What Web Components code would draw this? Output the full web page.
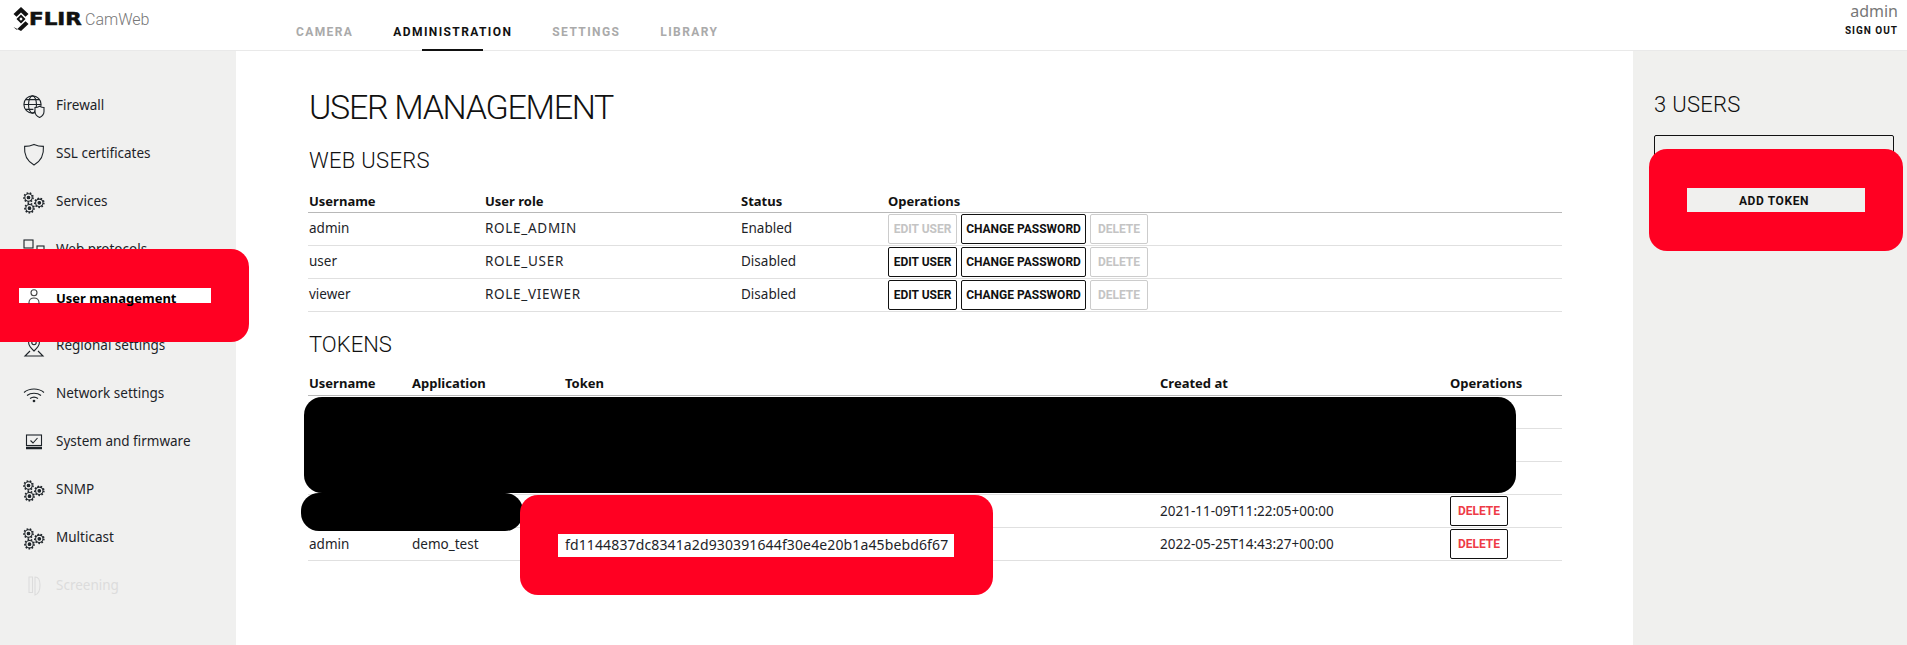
<!DOCTYPE html>
<html lang="en">
<head>
<meta charset="utf-8">
<title>FLIR CamWeb</title>
<style>
  html, body { margin: 0; height: 100%; background: #fff; }
  body { font-family: "Noto Sans", sans-serif; color: #1d2328; overflow: hidden; }
</style>
</head>
<body>
<cam-app>
  <app-header slot="top"></app-header>
  <side-nav slot="left">
    <nav-item icon="firewall">Firewall</nav-item>
    <nav-item icon="shield">SSL certificates</nav-item>
    <nav-item icon="gears">Services</nav-item>
    <nav-item icon="web">Web protocols</nav-item>
    <nav-item icon="user" active>User management</nav-item>
    <nav-item icon="pin">Regional settings</nav-item>
    <nav-item icon="wifi">Network settings</nav-item>
    <nav-item icon="monitor">System and firmware</nav-item>
    <nav-item icon="gears">SNMP</nav-item>
    <nav-item icon="gears">Multicast</nav-item>
    <nav-item icon="thermo" disabled>Screening</nav-item>
  </side-nav>
  <user-page></user-page>
  <side-panel slot="right"></side-panel>
</cam-app>

<!-- the black and red scribbles that lie over the screenshot -->
<redact-blob x="304" y="397" w="1212" h="96" color="#000"></redact-blob>
<redact-blob x="301" y="493" w="222" h="38" color="#000"></redact-blob>
<redact-blob x="-20" y="249" w="269" h="93" color="#ff0022" px="19" py="288" pw="192" ph="15" patch="#fff"></redact-blob>
<redact-blob x="520" y="495" w="473" h="100" color="#ff0022" px="558" py="534" pw="396" ph="23" patch="#fff"></redact-blob>
<redact-blob x="1649" y="149" w="254" h="102" color="#ff0022" px="1687" py="188" pw="178" ph="24" patch="#f0f0ee"></redact-blob>

<script>
const gear = (x, y) => `
  <circle cx="${x}" cy="${y}" r="3.7" fill="none" stroke="currentColor" stroke-width="1.1"/>
  <circle cx="${x}" cy="${y}" r="4.6" fill="none" stroke="currentColor" stroke-width="1.5" stroke-dasharray="1.6 1.6"/>
  <circle cx="${x}" cy="${y}" r="1.3" fill="currentColor"/>`;

const ICONS = {
  firewall: `
    <circle cx="10.5" cy="10.5" r="8.6"/>
    <ellipse cx="10.5" cy="10.5" rx="4" ry="8.6"/>
    <path d="M2 10.5h17M3.4 5.6h14.2M3.4 15.4h8"/>
    <path d="M13 13.5c2.2 0 3.6-.7 4.6-1.3 1 .6 2.4 1.3 4.4 1.3v4c0 2.8-2 4.8-4.4 6-2.6-1.2-4.6-3.2-4.6-6z" fill="#f0f0ef"/>`,
  shield: `
    <path d="M2.6 4.4C6 4.4 8.800 3.800 12 2.400c3.200 1.400 6 2 9.400 2 .6 7.400-1.800 14.400-9.400 18.600C4.400 18.800 2 11.800 2.600 4.400z"/>`,
  gears: gear(6.500, 7.500) + gear(7.500, 18.200) + gear(17.300, 12.800),
  web: `
    <rect x="2" y="2" width="9" height="8"/>
    <path d="M2 12.500h9" stroke-width="2.500"/>
    <rect x="15" y="8" width="7" height="7"/>`,
  user: `
    <circle cx="12" cy="6.800" r="3" stroke="#444"/>
    <path d="M7 18v-1.500c0-2.600 2.200-4.500 5-4.500s5 1.900 5 4.500V18" stroke="#444"/>`,
  pin: `
    <path d="M12 17c-3-2.800-5.400-5.400-5.400-8.500C6.600 5.500 9 3 12 3s5.400 2.500 5.400 5.500c0 3.100-2.400 5.700-5.400 8.500z"/>
    <circle cx="12" cy="8.500" r="2.200"/>
    <path d="M8 17l-5 5h18l-5-5"/>`,
  wifi: `
    <path d="M2 10.500c5.500-4.600 14.500-4.600 20 0M5 13.500c3.800-3 10.200-3 14 0M8 16.500c2.300-1.600 5.700-1.600 8 0"/>
    <circle cx="12" cy="19" r=".8" fill="currentColor"/>`,
  monitor: `
    <rect x="4.500" y="5" width="15" height="10.500"/>
    <path d="M8.500 10.500l2.500 2.500 4.500-5"/>
    <path d="M4 18h16" stroke-width="2.500"/>`,
  thermo: `
    <path d="M7 3h3.500v15.500H7zM13 3c3.500 0 5 3 5 8 0 4.500-1.500 9-5 10z"/>`
};

class CamApp extends HTMLElement {
  constructor() {
    super();
    this.attachShadow({ mode: 'open' });
    this.shadowRoot.innerHTML = `
      <style>
        :host { display: flex; flex-direction: column; height: 645px; }
        .main { flex: 1; display: flex; min-height: 0; }
      </style>
      <slot name="top"></slot>
      <div class="main">
        <slot name="left"></slot>
        <slot></slot>
        <slot name="right"></slot>
      </div>`;
  }
}

class AppHeader extends HTMLElement {
  constructor() {
    super();
    this.attachShadow({ mode: 'open' });
    this.shadowRoot.innerHTML = `
      <style>
        :host { display: flex; height: 50px; border-bottom: 1px solid #e9e9e9; background: #fff; flex: none; }
        .logo { display: flex; align-items: flex-start; width: 296px; padding-left: 13px; box-sizing: border-box; color: #111; }
        .logo svg { margin-top: 7px; flex: none; }
        .flir { font: 700 17px/1 "DejaVu Sans", sans-serif; margin: 11px 0 0 0; width: 54px; color: #111; -webkit-text-stroke: .5px #111; transform: scaleX(1.26); transform-origin: left; white-space: nowrap; }
        .cam { font: 300 16px/1 Roboto, sans-serif; color: #777; margin: 12px 0 0 2px; }
        nav { display: flex; flex: 1; font: 700 12px/1 Roboto, sans-serif; letter-spacing: 1.4px; color: #aaa; }
        nav a { position: relative; padding-top: 26px; margin-right: 40px; }
        nav a.on { color: #111; }
        nav a.on::after { content: ""; position: absolute; left: 29px; width: 61px; height: 2px; bottom: -1px; background: #111; }
        .who { text-align: right; padding: 1px 9px 0 0; }
        .name { font: 400 16px/20px "Noto Sans", sans-serif; color: #777; }
        .out { font: 700 10px/1 Roboto, sans-serif; letter-spacing: 1px; color: #111; margin-top: 5px; }
      </style>
      <div class="logo">
        <svg width="16" height="24" viewBox="0 0 16 24" fill="#111">
          <path d="M8 0l7.500 7-3 2.700L8 5.500 3.500 9.700.5 7zM8 24l7.500-7-3-2.700L8 18.500l-4.500 4.200-3-2.700z"/>
          <path d="M8 7.500l4.500 4.500L8 16.500 3.500 12zM8 10.300L6.300 12 8 13.700 9.700 12z" fill-rule="evenodd"/>
        </svg>
        <span class="flir">FLIR</span><span class="cam">CamWeb</span>
      </div>
      <nav>
        <a>CAMERA</a><a class="on">ADMINISTRATION</a><a>SETTINGS</a><a>LIBRARY</a>
      </nav>
      <div class="who">
        <div class="name">admin</div>
        <div class="out">SIGN OUT</div>
      </div>`;
  }
}

class SideNav extends HTMLElement {
  constructor() {
    super();
    this.attachShadow({ mode: 'open' });
    this.shadowRoot.innerHTML = `
      <style>
        :host { display: block; width: 236px; flex: none; background: #f0f0ef; padding-top: 31px; box-sizing: border-box; }
      </style>
      <slot></slot>`;
  }
}

class NavItem extends HTMLElement {
  connectedCallback() {
    if (this.shadowRoot) return;
    this.attachShadow({ mode: 'open' });
    this.shadowRoot.innerHTML = `
      <style>
        :host { display: flex; align-items: center; gap: 10px; height: 48px; padding-left: 22px; font: 400 13.5px/1 "Noto Sans", sans-serif; color: #1d2328; }
        :host([active]) { font-weight: 700; font-size: 13px; color: #000; position: relative; z-index: 5; }
        :host([disabled]) { color: #dcdcdc; }
        svg { flex: none; fill: none; stroke: currentColor; stroke-width: 1.100; }
      </style>
      <svg width="24" height="24" viewBox="0 0 24 24">${ICONS[this.getAttribute('icon')]}</svg>
      <slot></slot>`;
  }
}

class ActionButton extends HTMLElement {
  constructor() {
    super();
    this.attachShadow({ mode: 'open' });
    this.shadowRoot.innerHTML = `
      <style>
        :host { display: flex; align-items: center; justify-content: center; box-sizing: border-box; height: 30px; padding: 0 5px; border: 1px solid #111; border-radius: 2px; font: 700 12px/1 Roboto, sans-serif; color: #111; background: #fff; white-space: nowrap; }
        :host([off]) { border-color: #ccc; color: #c4c4c4; }
        :host([danger]) { color: #ee3b46; }
      </style>
      <slot></slot>`;
  }
}

class DataRow extends HTMLElement {
  connectedCallback() {
    if (this.shadowRoot) return;
    this.attachShadow({ mode: 'open' });
    this.shadowRoot.innerHTML = `
      <style>
        :host { display: grid; grid-template-columns: var(--cols); align-items: center; height: 33px; box-sizing: border-box; border-bottom: 1px solid #e0e0e0; padding-left: 1px; font: 400 13.5px/1 "Noto Sans", sans-serif; color: #1d2328; }
        :host([head]) { height: var(--head-h, 23px); font-size: 13px; font-weight: 700; color: #111; border-bottom-color: #b8b8b8; }
      </style>
      <slot></slot>`;
  }
}

class UserPage extends HTMLElement {
  constructor() {
    super();
    this.attachShadow({ mode: 'open' });
    this.shadowRoot.innerHTML = `
      <style>
        :host { display: block; flex: 1; min-width: 0; padding: 36px 71px 0 72px; background: #fff; }
        h1, h2 { margin: 0; font-family: Roboto, sans-serif; font-weight: 300; color: #111; padding-left: 1px; }
        h1 { font-size: 34px; line-height: 40px; letter-spacing: -1.3px; }
        h2 { font-size: 22px; line-height: 24px; }
        .web { --cols: 176px 256px 147px 1fr; margin-top: 17px; }
        .tok { --cols: 103px 153px 595px 290px 1fr; --head-h: 24px; margin-top: 15px; }
        .tok data-row:not([head]) span { position: relative; top: 1px; }
        h2.first { margin-top: 22px; letter-spacing: .3px; }
        h2.second { margin-top: 21px; }
        .role { letter-spacing: .7px; }
        .ops { display: flex; gap: 4px; }
        .edit { width: 69px; }
        .pass { width: 125px; }
        .del { width: 58px; }
        .over { font-size: 14px; letter-spacing: .13px; z-index: 5; }
      </style>
      <h1>USER MANAGEMENT</h1>
      <h2 class="first">WEB USERS</h2>
      <div class="web">
        <data-row head><span>Username</span><span>User role</span><span>Status</span><span>Operations</span></data-row>
        <data-row><span>admin</span><span class="role">ROLE_ADMIN</span><span>Enabled</span>
          <div class="ops"><action-button class="edit" off>EDIT USER</action-button><action-button class="pass">CHANGE PASSWORD</action-button><action-button class="del" off>DELETE</action-button></div></data-row>
        <data-row><span>user</span><span class="role">ROLE_USER</span><span>Disabled</span>
          <div class="ops"><action-button class="edit">EDIT USER</action-button><action-button class="pass">CHANGE PASSWORD</action-button><action-button class="del" off>DELETE</action-button></div></data-row>
        <data-row><span>viewer</span><span class="role">ROLE_VIEWER</span><span>Disabled</span>
          <div class="ops"><action-button class="edit">EDIT USER</action-button><action-button class="pass">CHANGE PASSWORD</action-button><action-button class="del" off>DELETE</action-button></div></data-row>
      </div>
      <h2 class="second">TOKENS</h2>
      <div class="tok">
        <data-row head><span>Username</span><span>Application</span><span>Token</span><span>Created at</span><span>Operations</span></data-row>
        <data-row></data-row>
        <data-row></data-row>
        <data-row></data-row>
        <data-row><span></span><span></span><span></span><span>2021-11-09T11:22:05+00:00</span><action-button class="del" danger>DELETE</action-button></data-row>
        <data-row><span>admin</span><span>demo_test</span><span class="over">fd1144837dc8341a2d930391644f30e4e20b1a45bebd6f67</span><span>2022-05-25T14:43:27+00:00</span><action-button class="del" danger>DELETE</action-button></data-row>
      </div>`;
  }
}

class SidePanel extends HTMLElement {
  constructor() {
    super();
    this.attachShadow({ mode: 'open' });
    this.shadowRoot.innerHTML = `
      <style>
        :host { display: block; width: 274px; flex: none; box-sizing: border-box; background: #f0f0ee; padding: 42px 13px 0 21px; }
        h2 { margin: 0; font: 300 22px/24px Roboto, sans-serif; letter-spacing: .3px; color: #111; }
        .add { margin-top: 18px; height: 100px; box-sizing: border-box; border: 1px solid #111; border-radius: 2px; text-align: center; padding-top: 59px; font: 700 12px/12px Roboto, sans-serif; letter-spacing: .6px; color: #111; }
        .add span { position: relative; z-index: 5; }
      </style>
      <h2>3 USERS</h2>
      <div class="add"><span>ADD TOKEN</span></div>`;
  }
}

class RedactBlob extends HTMLElement {
  connectedCallback() {
    if (this.shadowRoot) return;
    const a = n => this.getAttribute(n);
    this.attachShadow({ mode: 'open' });
    const patch = a('patch') ? `<div style="position:absolute;left:${a('px') - a('x')}px;top:${a('py') - a('y')}px;width:${a('pw')}px;height:${a('ph')}px;background:${a('patch')}"></div>` : '';
    this.shadowRoot.innerHTML = `
      <style>
        :host { position: absolute; z-index: 2; left: ${a('x')}px; top: ${a('y')}px; width: ${a('w')}px; height: ${a('h')}px; background: ${a('color')}; border-radius: 18px; }
      </style>
      ${patch}`;
  }
}

customElements.define('cam-app', CamApp);
customElements.define('app-header', AppHeader);
customElements.define('side-nav', SideNav);
customElements.define('nav-item', NavItem);
customElements.define('action-button', ActionButton);
customElements.define('data-row', DataRow);
customElements.define('user-page', UserPage);
customElements.define('side-panel', SidePanel);
customElements.define('redact-blob', RedactBlob);
</script>
</body>
</html>
